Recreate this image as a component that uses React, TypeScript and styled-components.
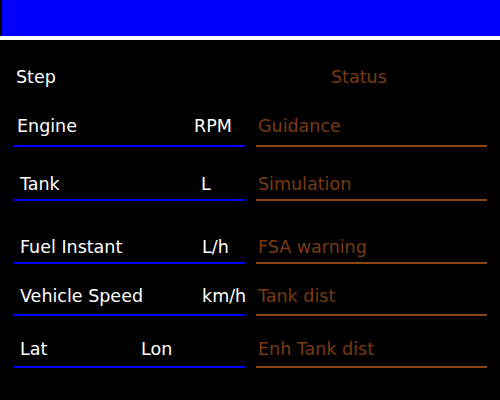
import React from "react";
import styled, { createGlobalStyle } from "styled-components";

const Global = createGlobalStyle`
  html, body { margin: 0; padding: 0; background: #000; }
  body { font-family: "DejaVu Sans", "Liberation Sans", sans-serif; font-size: 17.5px; }
`;

const Screen = styled.div`
  width: 500px;
  height: 400px;
  background: #000;
  overflow: hidden;
  display: flex;
  flex-direction: column;
`;

const TitleBar = styled.div`
  height: 36px;
  margin-left: 2px;
  background: #0000ff;
`;

const Divider = styled.div`
  height: 4px;
  background: #fff;
`;

const Table = styled.div`
  display: grid;
  grid-template-columns: 231px 231px;
  column-gap: 11px;
  padding-left: 14px;
`;

const HeaderCell = styled.div<{ $pad: number; $color: string }>`
  margin-top: 28px;
  padding-left: ${(p) => p.$pad}px;
  line-height: 19px;
  height: 19px;
  color: ${(p) => p.$color};
`;

const Cell = styled.div<{ $gap: number; $pb: number; $color: string; $pad: number; $unitX: number }>`
  margin-top: ${(p) => p.$gap}px;
  display: grid;
  grid-template-columns: ${(p) => p.$unitX}px 1fr;
  line-height: 19px;
  height: 19px;
  padding-left: ${(p) => p.$pad}px;
  padding-bottom: ${(p) => p.$pb}px;
  border-bottom: 2px solid ${(p) => p.$color};
  color: ${(p) => (p.$color === "#0000ff" ? "#fff" : "#7a3a12")};
  white-space: nowrap;
`;

const Label = styled.span``;
const Unit = styled.span``;

const rows = [
  { gap: 30, pb: 9, left: { label: "Engine", pad: 3, unit: "RPM", unitX: 177 }, right: "Guidance" },
  { gap: 28, pb: 5, left: { label: "Tank", pad: 6, unit: "L", unitX: 181 }, right: "Simulation" },
  { gap: 37, pb: 5, left: { label: "Fuel Instant", pad: 6, unit: "L/h", unitX: 182 }, right: "FSA warning" },
  { gap: 23, pb: 8, left: { label: "Vehicle Speed", pad: 6, unit: "km/h", unitX: 182 }, right: "Tank dist" },
  { gap: 24, pb: 7, left: { label: "Lat", pad: 6, unit: "Lon", unitX: 121 }, right: "Enh Tank dist" },
];

export default function App() {
  return (
    <Screen>
      <Global />
      <TitleBar />
      <Divider />
      <Table>
        <HeaderCell $pad={2} $color="#fff">Step</HeaderCell>
        <HeaderCell $pad={75} $color="#7a3a12">Status</HeaderCell>
        {rows.map((r) => (
          <React.Fragment key={r.right}>
            <Cell $gap={r.gap} $pb={r.pb} $color="#0000ff" $pad={r.left.pad} $unitX={r.left.unitX}>
              <Label>{r.left.label}</Label>
              <Unit>{r.left.unit}</Unit>
            </Cell>
            <Cell $gap={r.gap} $pb={r.pb} $color="#8b4513" $pad={2} $unitX={220}>
              <Label>{r.right}</Label>
            </Cell>
          </React.Fragment>
        ))}
      </Table>
    </Screen>
  );
}
